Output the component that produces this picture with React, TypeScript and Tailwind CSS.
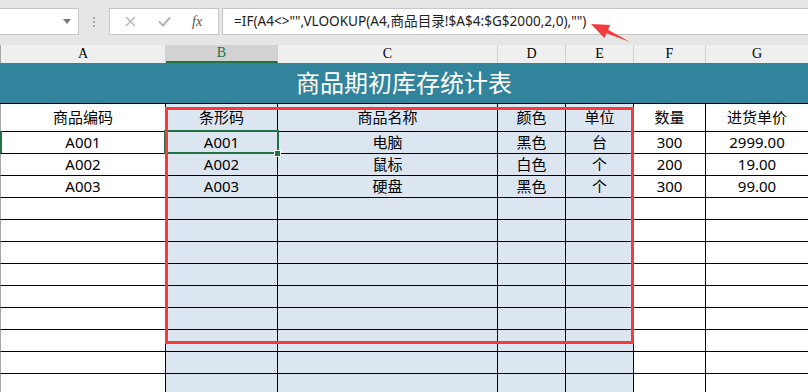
import React from 'react';

type Cell = string;

const colWidths = ['w-[165px]', 'w-[112px]', 'w-[220px]', 'w-[68px]', 'w-[68px]', 'w-[72px]', 'flex-1'];
const blueCols = [false, true, true, true, true, false, false];
const letters = ['A', 'B', 'C', 'D', 'E', 'F', 'G'];

const header: Cell[] = ['商品编码', '条形码', '商品名称', '颜色', '单位', '数量', '进货单价'];
const rows: Cell[][] = [
  ['A001', 'A001', '电脑', '黑色', '台', '300', '2999.00'],
  ['A002', 'A002', '鼠标', '白色', '个', '200', '19.00'],
  ['A003', 'A003', '硬盘', '黑色', '个', '300', '99.00'],
];
const emptyRows = 9;

function SheetRow({ cells, tall }: { cells: Cell[]; tall?: boolean }) {
  return (
    <div className={`flex ${tall ? 'h-[28px]' : 'h-[22px]'} border-b border-black border-l border-l-[#a6a6a6]`}>
      {cells.map((c, i) => (
        <div
          key={i}
          className={`${colWidths[i]} shrink-0 ${i < 6 ? 'border-r border-black' : ''} ${
            blueCols[i] ? 'bg-[#dce6f1]' : 'bg-white'
          } flex items-center justify-center text-[15px] text-black leading-none`}
        >
          {c}
        </div>
      ))}
    </div>
  );
}

export default function App() {
  return (
    <div className="relative w-[808px] h-[392px] overflow-hidden bg-white font-['Noto_Sans','Noto_Sans_CJK_SC',sans-serif]">
      {/* formula bar */}
      <div className="h-[45px] bg-[#e6e6e6] flex items-start pt-2">
        <div className="w-[79px] h-[27px] bg-white border border-l-0 border-[#c6c6c6] flex items-center justify-end pr-[7px]">
          <svg width="8" height="5" viewBox="0 0 8 5">
            <polygon points="0,0 8,0 4,5" fill="#7a7a7a" />
          </svg>
        </div>
        <div className="w-[30px] h-[27px] flex flex-col items-center justify-center gap-[2px]">
          <div className="w-[2px] h-[2px] bg-[#a6a6a6]" />
          <div className="w-[2px] h-[2px] bg-[#a6a6a6]" />
          <div className="w-[2px] h-[2px] bg-[#a6a6a6]" />
        </div>
        <div className="w-[110px] h-[27px] bg-white border border-[#c6c6c6] flex items-center pl-[14px]">
          <svg width="11" height="11" viewBox="0 0 11 11" className="ml-[1px]">
            <path d="M1 1 L10 10 M10 1 L1 10" stroke="#b4b4b4" strokeWidth="1.4" fill="none" />
          </svg>
          <svg width="13" height="11" viewBox="0 0 13 11" className="ml-[22px]">
            <path d="M1 5.5 L5 9.5 L12 1.5" stroke="#b4b4b4" strokeWidth="2" fill="none" />
          </svg>
          <span className="ml-[21px] text-[14px] italic text-[#555] font-['Liberation_Serif',serif] leading-none">fx</span>
        </div>
        <div className="flex-1 h-[27px] ml-[3px] bg-white border border-r-0 border-[#c6c6c6] flex items-center pl-[11px] text-[13.6px] text-[#222] whitespace-nowrap">
          =IF(A4&lt;&gt;"",VLOOKUP(A4,商品目录!$A$4:$G$2000,2,0),"")
        </div>
      </div>

      {/* column letters */}
      <div className="flex h-[18px] bg-[#efefef] border-l border-[#a6a6a6]">
        {letters.map((l, i) => (
          <div
            key={l}
            className={`${colWidths[i]} shrink-0 flex items-center justify-center text-[14px] leading-none font-['Liberation_Serif',serif] ${
              i < 6 ? 'border-r border-[#d0d0d0]' : ''
            } ${i === 1 ? 'bg-[#d2d2d2] text-[#217346] border-b-2 border-b-[#217346]' : 'text-black'}`}
          >
            {l}
          </div>
        ))}
      </div>

      {/* title */}
      <div className="h-[41px] bg-[#31849b] border-b border-black flex items-center justify-center text-white text-[24px] leading-none">
        商品期初库存统计表
      </div>

      <SheetRow cells={header} tall />
      {rows.map((r, i) => (
        <SheetRow key={i} cells={r} />
      ))}
      {Array.from({ length: emptyRows }).map((_, i) => (
        <SheetRow key={`e${i}`} cells={['', '', '', '', '', '', '']} />
      ))}

      {/* row-header marker of the active row */}
      <div className="absolute left-0 top-[131px] w-[2px] h-[22px] bg-[#217346]" />

      {/* active cell */}
      <div className="absolute left-[164px] top-[130px] w-[115px] h-[24px] border-2 border-[#217346]" />
      <div className="absolute left-[274px] top-[150px] w-[7px] h-[7px] bg-[#217346] border border-white" />

      {/* red highlight box */}
      <div className="absolute left-[165px] top-[107px] w-[469px] h-[237px] border-[3px] border-[#f43a3a]" />

      {/* arrow */}
      <svg className="absolute left-[585px] top-[15px]" width="55" height="35" viewBox="0 0 55 35">
        <polygon points="6,9 25.2,10.1 23.1,14.7 45,27 21.5,18.3 19.4,22.9" fill="#f43a3a" />
      </svg>
    </div>
  );
}
